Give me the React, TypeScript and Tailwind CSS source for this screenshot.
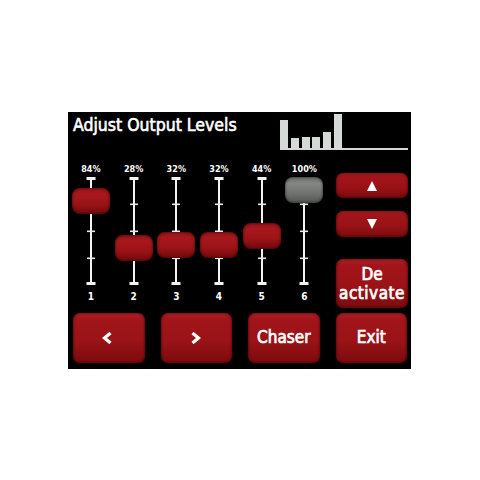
import React from "react";

const FONT = { fontFamily: '"DejaVu Sans Condensed", "DejaVu Sans", "Liberation Sans", sans-serif' };

const sliders = [
  { pct: "84%", n: "1", top: "top-[11px]", gray: false },
  { pct: "28%", n: "2", top: "top-[58px]", gray: false },
  { pct: "32%", n: "3", top: "top-[55px]", gray: false },
  { pct: "32%", n: "4", top: "top-[55px]", gray: false },
  { pct: "44%", n: "5", top: "top-[46px]", gray: false },
  { pct: "100%", n: "6", top: "top-[0px]", gray: true },
];

const bars = ["h-[28px]", "h-[10px]", "h-[11px]", "h-[11px]", "h-[16px]", "h-[34px]"];

const redBtn =
  "rounded-[7px] bg-[linear-gradient(180deg,#b0202a_0%,#a2151a_12%,#9a1317_55%,#7c0a0d_100%)] shadow-[inset_0_0_3px_rgba(40,0,0,0.9),0_0_2px_rgba(90,0,0,0.6)] flex items-center justify-center text-white";

const btnText = "text-[17px] font-normal font-stretch-condensed [-webkit-text-stroke:0.7px_white]";

function Track() {
  return (
    <svg width="12" height="108" viewBox="0 0 12 108" className="absolute left-1/2 -translate-x-1/2 top-0">
      <rect x="5" y="0" width="2" height="108" fill="#f2f2f2" />
      <rect x="1.5" y="0" width="9" height="3" fill="#f2f2f2" />
      <rect x="1.5" y="105" width="9" height="3" fill="#f2f2f2" />
      <rect x="2" y="26.5" width="8" height="1.6" fill="#e8e8e8" />
      <rect x="2" y="53.5" width="8" height="1.6" fill="#e8e8e8" />
      <rect x="2" y="80.5" width="8" height="1.6" fill="#e8e8e8" />
    </svg>
  );
}

export default function App() {
  return (
    <div className="w-[480px] h-[480px] bg-white pt-[112px] pl-[68px]" style={FONT}>
      <div className="w-[343px] h-[257px] bg-black flex flex-col">
        {/* Header */}
        <div className="h-[50px] flex justify-between items-start">
          <div className="ml-[5px] mt-[3px] text-[17.5px] leading-[20px] font-normal font-stretch-condensed text-white [-webkit-text-stroke:0.6px_white]">
            Adjust Output Levels
          </div>
          <div className="mt-[2px] mr-[3px] w-[128px] h-[36px] border-b-2 border-[#d6dad6] flex items-end gap-[2.8px]">
            {bars.map((h, i) => (
              <div key={i} className={`w-[8px] bg-[#d6dad6] ${h}`} />
            ))}
          </div>
        </div>

        {/* Middle */}
        <div className="h-[147px] flex">
          <div className="pl-[1.6px] flex">
            {sliders.map((s, i) => (
              <div key={i} className="w-[42.7px] flex flex-col items-center">
                <div className="h-[15px] text-[9px] leading-[15px] font-bold font-stretch-condensed text-white">{s.pct}</div>
                <div className="relative h-[108px] w-full">
                  <Track />
                  <div
                    className={`absolute left-1/2 -translate-x-1/2 ${s.top} w-[38px] h-[26px] rounded-[8px] ${
                      s.gray
                        ? "bg-[linear-gradient(180deg,#6a6d6a_0%,#848784_25%,#717471_60%,#525552_100%)] shadow-[inset_0_0_3px_rgba(0,0,0,0.7)]"
                        : "bg-[linear-gradient(180deg,#961217_0%,#a8181d_22%,#9c1317_60%,#700a0c_100%)] shadow-[inset_0_0_3px_rgba(40,0,0,0.9)]"
                    }`}
                  />
                </div>
                <div className="mt-[5px] h-[14px] text-[10px] leading-[14px] font-bold font-stretch-condensed text-white">{s.n}</div>
              </div>
            ))}
          </div>
          <div className="ml-auto mr-[3px] w-[72px] flex flex-col pt-[11px]">
            <div className={`${redBtn} h-[25px]`}>
              <svg width="10" height="10" viewBox="0 0 10 10">
                <polygon points="5,0 10,10 0,10" fill="white" />
              </svg>
            </div>
            <div className={`${redBtn} h-[26px] mt-[13px]`}>
              <svg width="10" height="10" viewBox="0 0 10 10">
                <polygon points="0,0 10,0 5,10" fill="white" />
              </svg>
            </div>
            <div className={`${redBtn} h-[49px] mt-[22px] flex-col leading-[19px] ${btnText}`}>
              <span>De</span>
              <span className="tracking-[0.5px]">activate</span>
            </div>
          </div>
        </div>

        {/* Bottom */}
        <div className="mt-[4px] pl-[5px] flex gap-[16px]">
          <div className={`${redBtn} w-[71.5px] h-[50px]`}>
            <svg width="10" height="12" viewBox="0 0 10 12" className="mr-[4px]">
              <polyline points="8.5,1 2.5,6 8.5,11" fill="none" stroke="white" strokeWidth="3.2" strokeLinejoin="miter" />
            </svg>
          </div>
          <div className={`${redBtn} w-[71.5px] h-[50px]`}>
            <svg width="10" height="12" viewBox="0 0 10 12">
              <polyline points="1.5,1 7.5,6 1.5,11" fill="none" stroke="white" strokeWidth="3.2" strokeLinejoin="miter" />
            </svg>
          </div>
          <div className={`${redBtn} w-[71.5px] h-[50px] ${btnText}`}>Chaser</div>
          <div className={`${redBtn} w-[71.5px] h-[50px] ${btnText}`}>Exit</div>
        </div>
      </div>
    </div>
  );
}
